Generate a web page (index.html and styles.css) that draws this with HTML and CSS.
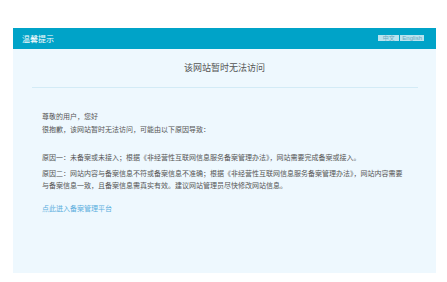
FILE: index.html
```html
<!DOCTYPE html>
<html lang="zh-CN">
<head>
<meta charset="utf-8">
<title>温馨提示</title>
<link rel="stylesheet" href="styles.css">
</head>
<body>
<div class="box">
  <div class="head">
    <span class="head-title">温馨提示</span>
    <div class="lang"><span class="lang-btn">中文</span><span class="lang-btn">English</span></div>
  </div>
  <div class="main">
    <h1 class="title">该网站暂时无法访问</h1>
    <div class="divider"></div>
    <div class="content">
      <p class="p1">尊敬的用户，您好</p>
      <p class="p2">很抱歉，该网站暂时无法访问，可能由以下原因导致：</p>
      <p class="p3">原因一：未备案或未接入；根据《非经营性互联网信息服务备案管理办法》，网站需要完成备案或接入。</p>
      <p class="p4">原因二：网站内容与备案信息不符或备案信息不准确；根据《非经营性互联网信息服务备案管理办法》，网站内容需要与备案信息一致，且备案信息需真实有效。建议网站管理员尽快修改网站信息。</p>
      <a class="link" href="#">点此进入备案管理平台</a>
    </div>
  </div>
</div>
</body>
</html>
```

FILE: styles.css
```css
* { box-sizing: border-box; }
html, body { margin: 0; padding: 0; background: #fff; }
body {
  padding-top: 28px;
  font-family: "Noto Sans CJK SC", "Liberation Sans", sans-serif;
  color: #555;
}
.box {
  width: 423px;
  margin-left: 13px;
  background: #eef8fe;
  height: 245px;
}
.head {
  height: 21px;
  background: #00a3c8;
  display: flex;
  align-items: center;
  justify-content: space-between;
  padding: 0 12px 0 9px;
}
.head-title {
  color: #fff;
  font-size: 8px;
  line-height: 10px;
}
.lang {
  display: flex;
  gap: 1px;
  margin-top: -2px;
}
.lang-btn {
  background: #b9e3ef;
  color: #6aa9c0;
  font-size: 6px;
  line-height: 6px;
  height: 6px;
  padding: 0 2px;
  font-family: "Liberation Sans", "Noto Sans CJK SC", sans-serif;
}
.lang-btn:first-child { width: 21px; text-align: center; }
.main { padding-top: 12px; }
.title {
  margin: 0;
  font-size: 9px;
  line-height: 14px;
  font-weight: normal;
  text-align: center;
  color: #555;
}
.divider {
  height: 1px;
  background: #d3ebf6;
  margin: 12px 18px 0 19px;
}
.content {
  padding: 22px 30px 0 29px;
  font-size: 7px;
  line-height: 12px;
}
.content p { margin: 0; }
.p2 { margin-top: 1px !important; }
.p3 { margin-top: 16px !important; }
.p4 { margin-top: 4px !important; }
.link {
  display: block;
  margin-top: 11px;
  color: #5aaedd;
  text-decoration: none;
}
```
